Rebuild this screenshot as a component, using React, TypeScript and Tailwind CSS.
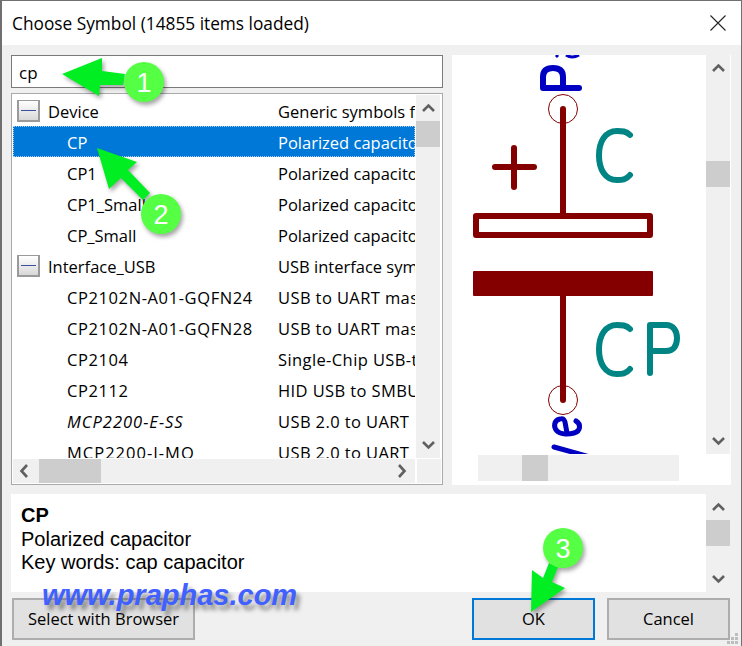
const rows = [
  { group: true, name: "Device", desc: "Generic symbols for" },
  { name: "CP", desc: "Polarized capacitor", selected: true },
  { name: "CP1", desc: "Polarized capacitor" },
  { name: "CP1_Small", desc: "Polarized capacitor" },
  { name: "CP_Small", desc: "Polarized capacitor" },
  { group: true, name: "Interface_USB", desc: "USB interface symbols" },
  { name: "CP2102N-A01-GQFN24", desc: "USB to UART master", wide: "tracking-[0.6px]" },
  { name: "CP2102N-A01-GQFN28", desc: "USB to UART master", wide: "tracking-[0.6px]" },
  { name: "CP2104", desc: "Single-Chip USB-to", wide: "tracking-[0.6px]" },
  { name: "CP2112", desc: "HID USB to SMBUS", wide: "tracking-[0.6px]" },
  { name: "MCP2200-E-SS", desc: "USB 2.0 to UART", italic: true, wide: "tracking-[1px]" },
  { name: "MCP2200-I-MQ", desc: "USB 2.0 to UART", wide: "tracking-[1px]" },
];

function Chevron({ dir }: { dir: "up" | "down" | "left" | "right" }) {
  const d = {
    up: "M1 8 L6.5 2.5 L12 8",
    down: "M1 2 L6.5 7.5 L12 2",
    left: "M8 -1 L2.5 5 L8 11",
    right: "M3 -1 L8.500 5 L3 11",
  }[dir];
  return (
    <svg width="13" height="10" viewBox="0 0 13 10" className="overflow-visible shrink-0">
      <path d={d} fill="none" stroke="#606060" strokeWidth="2.600" />
    </svg>
  );
}

function VScroll({ thumbTop, height }: { thumbTop: number; height: string }) {
  return (
    <div className={`w-6 ${height} bg-[#f0f0f0] flex flex-col items-center shrink-0`}>
      <div className="h-[26px] flex items-center justify-center w-full shrink-0">
        <Chevron dir="up" />
      </div>
      <div className="flex-1 w-full" style={{ paddingTop: thumbTop }}>
        <div className="h-[26px] bg-[#cdcdcd]" />
      </div>
      <div className="h-[26px] flex items-center justify-center w-full shrink-0">
        <Chevron dir="down" />
      </div>
    </div>
  );
}

function Expander() {
  return (
    <div className="w-[23px] h-[23px] -mt-[3px] border-2 border-[#9a9a9a] bg-gradient-to-b from-white to-[#d8d8d8] flex items-center justify-center mr-2 shrink-0">
      <div className="w-[15px] h-px bg-[#3a4fa0]" />
    </div>
  );
}

function SymbolList() {
  return (
    <div className="mt-[5px] h-[392px] border border-[#a9a9a9] bg-white p-px flex flex-col">
      <div className="flex h-[363px]">
        <div className="w-[402px] h-full overflow-hidden">
          {rows.map((r) => (
            <div
              key={r.name}
              className={`h-[31px] pt-[3px] flex items-center text-[16.500px] shrink-0 ${
                r.selected ? "bg-[#0078d7] text-white outline-1 -outline-offset-1 outline-dotted outline-[#a8cdf0]" : "text-black"
              }`}
            >
              <div className={`w-[265px] shrink-0 flex items-center whitespace-nowrap overflow-hidden ${r.group ? "pl-[4px]" : "pl-[54px]"} ${r.italic ? "italic" : ""} ${r.wide ?? ""}`}>
                {r.group && <Expander />}
                {r.name}
              </div>
              <div className={`flex-1 whitespace-nowrap overflow-hidden ${r.wide ? "tracking-[0.4px]" : ""}`}>{r.desc}</div>
            </div>
          ))}
        </div>
        <VScroll thumbTop={0} height="h-[363px] ml-[1px]" />
      </div>
      <div className="flex h-[26px] mt-px">
        <div className="w-[402px] bg-[#f0f0f0] flex items-center justify-between px-[6px] relative">
          <Chevron dir="left" />
          <div className="absolute left-[26px] top-0 w-[62px] h-full bg-[#cdcdcd]" />
          <Chevron dir="right" />
        </div>
        <div className="w-6 ml-[2px] bg-[#f0f0f0]" />
      </div>
    </div>
  );
}

function Preview() {
  return (
    <svg width="254" height="399" viewBox="452 55 254 399" className="block shrink-0" fill="none">
      <path d="M556 55 L558 57 M566 55 Q572 59 579 55" stroke="#0000c2" strokeWidth="3" />
      <path d="M579 88 H543 V77 Q543 68 553 68 Q563 68 563 77 V88" stroke="#0000c2" strokeWidth="6" strokeLinecap="round" strokeLinejoin="round" />
      <circle cx="563" cy="109" r="14.500" stroke="#840000" />
      <path d="M563 109 V214" stroke="#840000" strokeWidth="6" strokeLinecap="round" />
      <path d="M495 167 H534 M514 148 V187" stroke="#840000" strokeWidth="6" strokeLinecap="round" />
      <path d="M630 135 C626 131 622 131 617 131 C605 131 599 142 599 155.500 C599 169 605 180 617 180 C622 180 626 180 630 175" stroke="#008484" strokeWidth="6" strokeLinecap="round" />
      <rect x="476" y="216" width="174" height="19" stroke="#840000" strokeWidth="6" strokeLinejoin="round" />
      <rect x="473" y="271" width="180" height="25" rx="1" fill="#840000" />
      <path d="M563 296 V400" stroke="#840000" strokeWidth="6" strokeLinecap="round" />
      <circle cx="563" cy="400" r="14.500" stroke="#840000" />
      <path d="M630 329 C626 325 622 325 617 325 C605 325 599 336 599 349.500 C599 363 605 374 617 374 C622 374 626 374 630 369" stroke="#008484" strokeWidth="6" strokeLinecap="round" />
      <path d="M650 373 V325 H666 C674 325 677 332 677 338 C677 345 674 351 666 351 H650" stroke="#008484" strokeWidth="6" strokeLinecap="round" strokeLinejoin="round" />
      <path d="M576 421 C581 424 581 431 574 433 C567 435 560 434 557 431 C553 427 554 420 560 419 C563 418 564 419 565 422 L567 433" stroke="#0000c2" strokeWidth="5" strokeLinecap="round" />
      <path d="M554 447 L590 457" stroke="#0000c2" strokeWidth="5" strokeLinecap="round" />
    </svg>
  );
}

function Button({ label, primary, className }: { label: string; primary?: boolean; className: string }) {
  return (
    <button
      type="button"
      className={`h-[42px] bg-[#e1e1e1] text-black text-[16.500px] flex items-center justify-center ${
        primary ? "border-2 border-[#0078d7]" : "border-2 border-[#adadad]"
      } ${className}`}
    >
      {label}
    </button>
  );
}

function Annotations() {
  return (
    <svg width="742" height="646" viewBox="0 0 742 646" className="absolute -left-[2px] -top-px pointer-events-none">
      <g className="drop-shadow-[2px_3px_2px_rgba(0,0,0,0.350)]">
        <path d="M62 74 L102 58 L102 71 L125 74 L123 85 L100 85 L99 96 Z" fill="#00ee22" />
        <circle cx="144" cy="82" r="20" fill="#55ff44" />
        <path d="M97 148 L137 162 L128 170 L150 193 L143 200 L121 178 L109 189 Z" fill="#00ee22" />
        <circle cx="161" cy="214" r="20" fill="#55ff44" />
        <path d="M531 612 L532 570 L543 578 L549 563 L558 567 L552 582 L565 588 Z" fill="#00ee22" />
        <circle cx="563" cy="548" r="20" fill="#55ff44" />
      </g>
      <g fontFamily="'Liberation Sans', sans-serif" fontSize="27" fill="#ffffff" textAnchor="middle">
        <text x="144" y="92">1</text>
        <text x="161" y="224">2</text>
        <text x="563" y="558">3</text>
      </g>
      {/* resize grip */}
      <g fill="#bdbdbd">
        <rect x="735" y="633" width="3" height="3" />
        <rect x="731" y="637" width="3" height="3" />
        <rect x="735" y="637" width="3" height="3" />
        <rect x="727" y="641" width="3" height="3" />
        <rect x="731" y="641" width="3" height="3" />
        <rect x="735" y="641" width="3" height="3" />
      </g>
      {/* bits of the desktop behind the window edge */}
      <g fill="#0f5a5a">
        <rect x="0" y="87" width="1" height="31" />
        <rect x="0" y="137" width="1" height="20" />
        <rect x="0" y="306" width="1" height="30" />
        <rect x="0" y="356" width="1" height="30" />
      </g>
    </svg>
  );
}

export default function App() {
  return (
    <div className="relative w-[742px] h-[646px] overflow-hidden bg-[#f0f0f0] border-l-2 border-t border-r border-[#707070] font-['Open_Sans','Noto_Sans',sans-serif]">
      <div className="h-[44px] bg-white flex items-center justify-between pl-[10px] pr-[15px] text-[17.300px] text-black">
        <span className="pt-[2px]">Choose Symbol (14855 items loaded)</span>
        <svg width="16" height="16" viewBox="0 0 16 16" fill="none">
          <path d="M0.500 0.500 L15.500 15.500 M15.500 0.500 L0.500 15.500" stroke="#222" strokeWidth="1.100" />
        </svg>
      </div>

      <div className="pl-[9px] pt-[10px] flex flex-col">
        <div className="flex h-[430px]">
          <div className="w-[432px] shrink-0 flex flex-col">
            <div className="h-[33px] border border-[#7a7a7a] bg-white flex items-center pl-[7px] pt-[3px] text-[17px] text-black">cp</div>
            <SymbolList />
          </div>
          <div className="ml-[9px] w-[279px] shrink-0 bg-white flex flex-col">
            <div className="flex">
              <Preview />
              <VScroll thumbTop={80} height="h-[399px] w-[24px]" />
            </div>
            <div className="h-[26px] mt-px ml-[26px] w-[201px] bg-[#f0f0f0] pl-[44px]">
              <div className="w-[26px] h-full bg-[#cdcdcd]" />
            </div>
          </div>
        </div>

        <div className="flex h-[98px] mt-[9px] w-[719px]">
          <div className="w-[695px] bg-white pl-[10px] pt-[10px] font-['Liberation_Sans',sans-serif] text-[20px] leading-[23.500px] text-black">
            <div className="font-bold">CP</div>
            <div>Polarized capacitor</div>
            <div>Key words: cap capacitor</div>
          </div>
          <VScroll thumbTop={0} height="h-[98px]" />
        </div>

        <div className="flex mt-[6px] w-[719px] items-center">
          <Button label="Select with Browser" className="w-[183px] ml-px" />
          <Button label="OK" primary className="w-[123px] ml-auto" />
          <Button label="Cancel" className="w-[123px] ml-[12px]" />
        </div>
      </div>

      <Annotations />

      <span className="absolute left-[40px] top-[576px] font-['Liberation_Sans',sans-serif] font-bold italic text-[29px] leading-[36px] text-[#4060ff] whitespace-nowrap [text-shadow:4px_5px_4px_rgba(60,60,60,0.550)]">
        www.praphas.com
      </span>
    </div>
  );
}
